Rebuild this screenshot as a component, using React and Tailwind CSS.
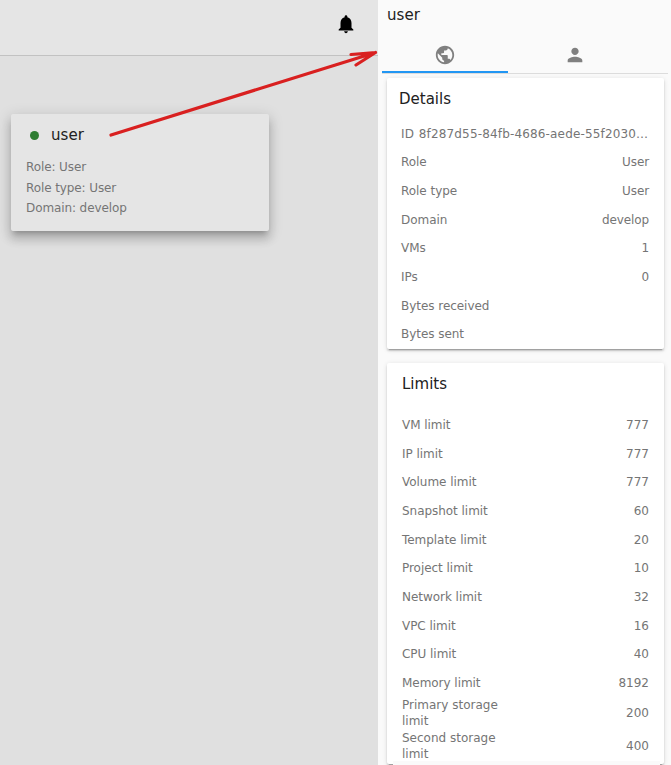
import React from 'react';

const details = [
  ['Role', 'User'],
  ['Role type', 'User'],
  ['Domain', 'develop'],
  ['VMs', '1'],
  ['IPs', '0'],
  ['Bytes received', ''],
  ['Bytes sent', ''],
];

const limits = [
  ['VM limit', '777'],
  ['IP limit', '777'],
  ['Volume limit', '777'],
  ['Snapshot limit', '60'],
  ['Template limit', '20'],
  ['Project limit', '10'],
  ['Network limit', '32'],
  ['VPC limit', '16'],
  ['CPU limit', '40'],
  ['Memory limit', '8192'],
];

const storage = [
  ['Primary storage limit', '200'],
  ['Second storage limit', '400'],
];

function Icon({ d, className }) {
  return (
    <svg viewBox="0 0 24 24" fill="currentColor" className={className}>
      <path d={d} />
    </svg>
  );
}

const BELL =
  'M12 22c1.100 0 2-.9 2-2h-4c0 1.100.9 2 2 2zm6-6v-5c0-3.070-1.640-5.640-4.500-6.320V4c0-.83-.67-1.500-1.500-1.500s-1.500.67-1.500 1.500v.68C7.630 5.360 6 7.920 6 11v5l-2 2v1h16v-1l-2-2z';
const GLOBE =
  'M12 2C6.480 2 2 6.480 2 12s4.480 10 10 10 10-4.480 10-10S17.520 2 12 2zm-1 17.930c-3.950-.49-7-3.850-7-7.930 0-.62.080-1.210.21-1.790L9 15v1c0 1.100.9 2 2 2v1.930zm6.900-2.540c-.26-.81-1-1.390-1.900-1.390h-1v-3c0-.55-.45-1-1-1H8v-2h2c.55 0 1-.45 1-1V7h2c1.100 0 2-.9 2-2v-.41c2.930 1.190 5 4.060 5 7.410 0 2.080-.8 3.970-2.100 5.390z';
const PERSON =
  'M12 12c2.210 0 4-1.790 4-4s-1.790-4-4-4-4 1.790-4 4 1.790 4 4 4zm0 2c-2.670 0-8 1.340-8 4v2h16v-2c0-2.660-5.330-4-8-4z';

function Row({ label, value }) {
  return (
    <div className="flex h-[28.670px] items-center justify-between">
      <span className="tracking-[-0.04px]">{label}</span>
      <span>{value}</span>
    </div>
  );
}

export default function App() {
  return (
    <div className="relative flex h-[765px] w-[671px] overflow-hidden bg-[#e0e0e0] font-['DejaVu_Sans',sans-serif] text-[12px] leading-4 text-[#757575]">
      <main className="w-[378px] shrink-0">
        <header className="flex h-14 items-center justify-end border-b border-[#c2c2c2] bg-[#e5e5e5] pr-[21px] pb-[7px]">
          <Icon d={BELL} className="size-[22px] text-black" />
        </header>
        <section className="mt-[58px] ml-[11px] h-[117px] w-[258px] rounded-[2px] bg-[#e5e5e5] pt-[11px] pl-[15px] shadow-[0_5px_5px_-3px_rgba(0,0,0,.2),0_8px_10px_1px_rgba(0,0,0,.14),0_3px_14px_2px_rgba(0,0,0,.12)]">
          <div className="flex h-5 items-center pl-1">
            <span className="mt-px size-[9px] rounded-full bg-[#2e7d32]" />
            <h2 className="ml-3 text-[15px] leading-5 tracking-[0.1px] text-[#212121]">user</h2>
          </div>
          <div className="mt-[12px] leading-[20.500px] tracking-[-0.1px]">
            <p>Role: User</p>
            <p>Role type: User</p>
            <p>Domain: develop</p>
          </div>
        </section>
      </main>

      <aside className="w-[293px] shrink-0 bg-[#fafafa]">
        <h1 className="h-9 pt-[5px] pl-[9px] text-[15px] leading-5 tracking-[0.1px] text-[#212121]">user</h1>
        <nav className="ml-1 flex h-[38px] w-[286px] border-b border-[#dcdcdc] text-[#808080]">
          <div className="flex h-[37px] w-[126px] items-center justify-center border-b-2 border-[#2196f3]">
            <Icon d={GLOBE} className="mt-[3px] size-[22px]" />
          </div>
          <div className="flex h-[37px] w-[134px] items-center justify-center pb-0.5">
            <Icon d={PERSON} className="mt-[3px] size-[22px]" />
          </div>
        </nav>

        <section className="mt-1 ml-[9px] h-[271px] w-[277px] rounded-[2px] bg-white pt-[11px] pr-[15px] pl-[14px] shadow-[0_3px_1px_-2px_rgba(0,0,0,.2),0_2px_2px_rgba(0,0,0,.14),0_1px_5px_rgba(0,0,0,.12)]">
          <h2 className="-ml-0.5 text-[15px] leading-5 text-[#212121]">Details</h2>
          <div className="mt-[10.400px] tracking-[-0.1px]">
            <div className="flex h-[28.670px] items-center">
              <span className="whitespace-nowrap tracking-[0.160px] [word-spacing:0.700px]">ID 8f287d55-84fb-4686-aede-55f2030…</span>
            </div>
            {details.map(([label, value]) => (
              <Row key={label} label={label} value={value} />
            ))}
          </div>
        </section>

        <section className="mt-[14px] ml-[9px] h-[401px] w-[277px] rounded-[2px] bg-white pt-[11px] pr-[15px] pl-[15px] shadow-[0_3px_1px_-2px_rgba(0,0,0,.2),0_2px_2px_rgba(0,0,0,.14),0_1px_5px_rgba(0,0,0,.12)]">
          <h2 className="text-[15px] leading-5 text-[#212121]">Limits</h2>
          <div className="mt-[16.670px]">
            {limits.map(([label, value]) => (
              <Row key={label} label={label} value={value} />
            ))}
          </div>
          <div className="-mt-[0.600px] h-[64.230px]">
            {storage.map(([label, value]) => (
              <div key={label} className="flex h-[33px] items-center justify-between">
                <span className="w-[110px]">{label}</span>
                <span>{value}</span>
              </div>
            ))}
          </div>
          <div className="-ml-[9px] h-1 w-[267px] bg-[#fafafa]" />
        </section>
      </aside>

      <svg
        className="pointer-events-none absolute top-0 left-0 h-[160px] w-[378px]"
        viewBox="0 0 378 160"
        fill="none"
        stroke="#d92020"
        strokeWidth="3.200"
        strokeLinecap="round"
        strokeLinejoin="round"
      >
        <path d="M111 135L375.500 52.500M351 54.500L375.500 52.500L356 65" />
      </svg>
    </div>
  );
}
